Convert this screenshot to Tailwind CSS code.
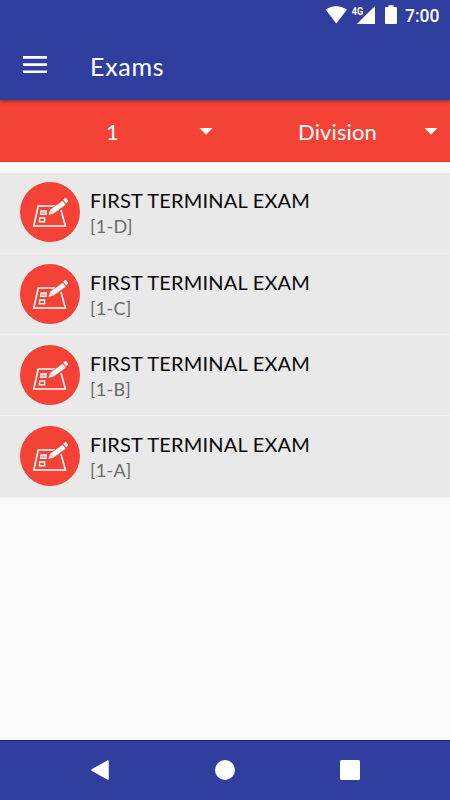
<!DOCTYPE html>
<html lang="en">
<head>
<meta charset="utf-8">
<title>Exams</title>
<script src="https://cdn.jsdelivr.net/npm/@tailwindcss/browser@4"></script>
</head>
<body class="w-[450px] h-[800px] overflow-hidden bg-[#fafafa] font-['Lato',sans-serif] flex flex-col">
<svg class="hidden">
  <symbol id="exam" viewBox="0 0 60 60">
    <path d="M35 24H18.2L13.8 44H45.4L41 28" fill="none" stroke="#fff" stroke-width="1.6"/>
    <path d="M21 29h5v3.2h-5.4zM19.8 36h4.8v3.8h-5.2z" fill="none" stroke="#fff" stroke-width="1.4"/>
    <path d="M22 30l1.3 1 3.7-2.6" fill="none" stroke="#fff" stroke-width=".8"/>
    <path d="M28.1 33.2l1.9-5.6 12.8-9.1 3.2 4.3-12.8 9.3z" fill="#fff" stroke="#f44336" stroke-width=".6"/>
    <path d="M43.2 17.6l1.8-1.3q.9-.5 1.5.3l1.4 1.9q.6.9-.2 1.5l-1.7 1.3z" fill="#fff"/>
    <path d="M30.5 28.3l2.8 3.5" stroke="#f44336" stroke-width=".4"/>
  </symbol>
</svg>
<header class="relative z-10 h-[100px] shrink-0 bg-[#303f9f] shadow-[0_1px_4px_rgba(0,0,0,0.45)] text-white">
  <div class="h-8 flex items-start justify-end pr-[10px]">
    <svg class="w-[80px] h-8 shrink-0" viewBox="0 0 80 32" fill="#fff">
      <path d="M5.5 9.5Q16.3 2.5 27 9.5L16.3 23.5z"/>
      <path d="M55 6v18H36.8z"/>
      <rect x="30" y="5" width="13.5" height="10" fill="#303f9f"/>
      <text x="31.7" y="14.5" font-family="Roboto, sans-serif" font-size="10" font-weight="700" textLength="11.5" lengthAdjust="spacingAndGlyphs">4G</text>
      <path d="M66 7h2.5V5.3h5V7H76q1 0 1 1v15q0 1-1 1H66q-1 0-1-1V8q0-1 1-1z"/>
    </svg>
    <span class="w-[35px] ml-[5px] h-8 leading-8 text-[17.5px] font-medium font-['Roboto',sans-serif] whitespace-nowrap">7:00</span>
  </div>
  <div class="h-[68px] flex items-center pl-[23px]">
    <svg class="w-6 h-[18px] -mt-[3px]" viewBox="0 0 24 18" fill="#fff"><path d="M0 0h24v2.8H0zM0 7.2h24V10H0zM0 14.4h24v2.7H0z"/></svg>
    <h1 class="ml-[43px] text-[25px] leading-8 tracking-[0.7px]">Exams</h1>
  </div>
</header>
<div class="h-[62px] shrink-0 bg-[#f44336] grid grid-cols-2 text-white text-[22px] border-b border-[#ee3a28]">
  <div class="flex items-center"><span class="w-[188px] pl-[37px] text-center pt-[2px]">1</span><svg class="mt-[2px] ml-[11px] w-[14px] h-[7px]" viewBox="0 0 14 7" fill="#fff"><path d="M.5 0h13L7 6.7z"/></svg></div>
  <div class="flex items-center"><span class="w-[188px] pl-[37px] text-center pt-[2px] tracking-[0.1px]">Division</span><svg class="mt-[2px] ml-[11px] w-[14px] h-[7px]" viewBox="0 0 14 7" fill="#fff"><path d="M.5 0h13L7 6.7z"/></svg></div>
</div>
<main class="flex-1 pt-[10.5px]">
  <ul>
    <li class="h-[81.25px] flex items-start bg-[#e9e9e9] border-b border-[#f0f0f0] pl-5 pt-[9.8px]">
      <div class="size-[60px] rounded-full bg-[#f44336]"><svg class="size-[60px]"><use href="#exam"/></svg></div>
      <div class="ml-[10px] pt-[5.1px]"><p class="text-[20px] leading-[26px] tracking-[0.2px] text-[#080808] whitespace-nowrap">FIRST TERMINAL EXAM</p><p class="text-[18px] leading-[27px] tracking-[0.3px] text-[#6b6b6b]">[1-D]</p></div>
    </li>
    <li class="h-[81.25px] flex items-start bg-[#e9e9e9] border-b border-[#f0f0f0] pl-5 pt-[9.8px]">
      <div class="size-[60px] rounded-full bg-[#f44336]"><svg class="size-[60px]"><use href="#exam"/></svg></div>
      <div class="ml-[10px] pt-[5.1px]"><p class="text-[20px] leading-[26px] tracking-[0.2px] text-[#080808] whitespace-nowrap">FIRST TERMINAL EXAM</p><p class="text-[18px] leading-[27px] tracking-[0.3px] text-[#6b6b6b]">[1-C]</p></div>
    </li>
    <li class="h-[81.25px] flex items-start bg-[#e9e9e9] border-b border-[#f0f0f0] pl-5 pt-[9.8px]">
      <div class="size-[60px] rounded-full bg-[#f44336]"><svg class="size-[60px]"><use href="#exam"/></svg></div>
      <div class="ml-[10px] pt-[5.1px]"><p class="text-[20px] leading-[26px] tracking-[0.2px] text-[#080808] whitespace-nowrap">FIRST TERMINAL EXAM</p><p class="text-[18px] leading-[27px] tracking-[0.3px] text-[#6b6b6b]">[1-B]</p></div>
    </li>
    <li class="h-[81.25px] flex items-start bg-[#e9e9e9] border-b border-[#f0f0f0] pl-5 pt-[9.8px]">
      <div class="size-[60px] rounded-full bg-[#f44336]"><svg class="size-[60px]"><use href="#exam"/></svg></div>
      <div class="ml-[10px] pt-[5.1px]"><p class="text-[20px] leading-[26px] tracking-[0.2px] text-[#080808] whitespace-nowrap">FIRST TERMINAL EXAM</p><p class="text-[18px] leading-[27px] tracking-[0.3px] text-[#6b6b6b]">[1-A]</p></div>
    </li>
  </ul>
</main>
<nav class="h-[60px] shrink-0 bg-[#303f9f] border-t border-[#1420a0] flex items-center justify-between pl-[90px] pr-[90px] pb-px">
  <svg class="size-5" viewBox="0 0 20 20"><path d="M2 10L18 1V19z" fill="#fff" stroke="#fff" stroke-width="1.5" stroke-linejoin="round"/></svg>
  <svg class="size-5" viewBox="0 0 20 20"><circle cx="10" cy="10" r="10" fill="#fff"/></svg>
  <svg class="size-5" viewBox="0 0 20 20"><rect width="20" height="20" rx="1.5" fill="#fff"/></svg>
</nav>
</body>
</html>
